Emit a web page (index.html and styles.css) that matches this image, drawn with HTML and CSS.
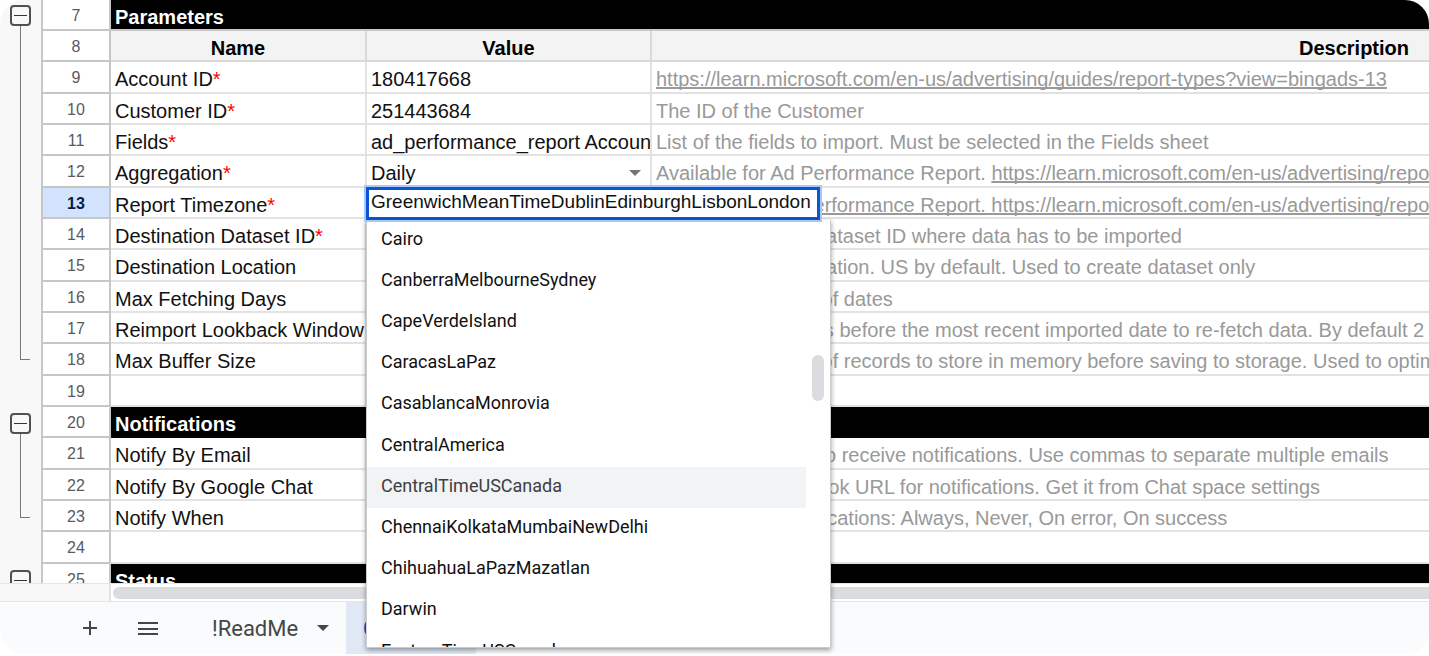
FILE: index.html
```html
<!DOCTYPE html>
<html lang="en">
<head>
<meta charset="utf-8">
<title>Report import settings</title>
<link rel="stylesheet" href="styles.css">
</head>
<body>
<main class="app">
  <div class="sheet">
    <div class="gutter">
      <div class="group group-parameters">
        <button class="toggle" aria-label="Collapse Parameters"></button>
        <span class="bracket"></span>
      </div>
      <div class="group group-notifications">
        <button class="toggle" aria-label="Collapse Notifications"></button>
        <span class="bracket"></span>
      </div>
      <div class="group">
        <button class="toggle" aria-label="Collapse Status"></button>
      </div>
    </div>
    <div class="grid">
      <table>
        <colgroup><col class="col-number"><col class="col-name"><col class="col-value"><col class="col-description"></colgroup>
        <tbody>
          <tr class="section first"><th class="number">7</th><td>Parameters</td><td></td><td></td></tr>
          <tr class="heading"><th class="number">8</th><th>Name</th><th>Value</th><th>Description</th></tr>
          <tr><th class="number">9</th><td>Account ID<span class="required">*</span></td><td>180417668</td><td><a href="#">https://learn.microsoft.com/en-us/advertising/guides/report-types?view=bingads-13</a></td></tr>
          <tr><th class="number">10</th><td>Customer ID<span class="required">*</span></td><td>251443684</td><td>The ID of the Customer</td></tr>
          <tr><th class="number">11</th><td>Fields<span class="required">*</span></td><td>ad_performance_report Account</td><td>List of the fields to import. Must be selected in the Fields sheet</td></tr>
          <tr><th class="number">12</th><td>Aggregation<span class="required">*</span></td><td><button class="cell-select">Daily<svg width="14" height="8" viewBox="0 0 14 8"><path d="M1 1h12L7 7z" fill="#757575"/></svg></button></td><td>Available for Ad Performance Report. <a href="#">https://learn.microsoft.com/en-us/advertising/reporting-service</a></td></tr>
          <tr><th class="number selected">13</th><td>Report Timezone<span class="required">*</span></td><td></td><td><a href="#">Available for Ad Performance Report. https://learn.microsoft.com/en-us/advertising/reporting-service</a></td></tr>
          <tr><th class="number">14</th><td>Destination Dataset ID<span class="required">*</span></td><td></td><td>Google BigQuery dataset ID where data has to be imported</td></tr>
          <tr><th class="number">15</th><td>Destination Location</td><td></td><td>Google Dataset location. US by default. Used to create dataset only</td></tr>
          <tr><th class="number">16</th><td>Max Fetching Days</td><td></td><td>Maximum number of dates</td></tr>
          <tr><th class="number">17</th><td>Reimport Lookback Window</td><td></td><td>The number of days before the most recent imported date to re-fetch data. By default 2 days</td></tr>
          <tr><th class="number">18</th><td>Max Buffer Size</td><td></td><td>Maximum number of records to store in memory before saving to storage. Used to optimize</td></tr>
          <tr><th class="number">19</th><td></td><td></td><td></td></tr>
          <tr class="section"><th class="number">20</th><td>Notifications</td><td></td><td></td></tr>
          <tr><th class="number">21</th><td>Notify By Email</td><td></td><td>Emails addresses to receive notifications. Use commas to separate multiple emails</td></tr>
          <tr><th class="number">22</th><td>Notify By Google Chat</td><td></td><td>Google chat webhook URL for notifications. Get it from Chat space settings</td></tr>
          <tr><th class="number">23</th><td>Notify When</td><td></td><td>When to send notifications: Always, Never, On error, On success</td></tr>
          <tr><th class="number">24</th><td></td><td></td><td></td></tr>
          <tr class="section"><th class="number">25</th><td>Status</td><td></td><td></td></tr>
        </tbody>
      </table>
    </div>
  </div>
  <div class="scroll-strip"><span class="corner"></span><span class="track"><span class="thumb"></span></span></div>
  <nav class="tabs">
    <button class="icon-button" aria-label="Add sheet"><svg width="16" height="16" viewBox="0 0 16 16"><path d="M8 1v14M1 8h14" stroke="#444746" stroke-width="2"/></svg></button>
    <button class="icon-button menu" aria-label="All sheets"><svg width="22" height="16" viewBox="0 0 22 16"><path d="M1 3h20M1 9h20M1 14h20" stroke="#444746" stroke-width="2"/></svg></button>
    <button class="tab">!ReadMe<svg width="12" height="8" viewBox="0 0 12 8"><path d="M0 1h12L6 7z" fill="#444746"/></svg></button>
    <button class="tab active">Config</button>
  </nav>
  <div class="editor">
    <input class="editor-input" aria-label="Report Timezone" value="GreenwichMeanTimeDublinEdinburghLisbonLondon">
    <div class="dropdown">
      <ul class="options" role="listbox" aria-label="Timezones">
        <li role="option">Cairo</li>
        <li role="option">CanberraMelbourneSydney</li>
        <li role="option">CapeVerdeIsland</li>
        <li role="option">CaracasLaPaz</li>
        <li role="option">CasablancaMonrovia</li>
        <li role="option">CentralAmerica</li>
        <li role="option" class="hovered" aria-selected="true">CentralTimeUSCanada</li>
        <li role="option">ChennaiKolkataMumbaiNewDelhi</li>
        <li role="option">ChihuahuaLaPazMazatlan</li>
        <li role="option">Darwin</li>
        <li role="option">EasternTimeUSCanada</li>
      </ul>
      <div class="dropdown-scroll"><span class="dropdown-thumb"></span></div>
    </div>
  </div>
</main>
</body>
</html>
```
FILE: styles.css
```css
* {
  box-sizing: border-box;
}

body {
  margin: 0;
  background: #fff;
  font-family: "Liberation Sans", Arial, sans-serif;
  font-size: 20px;
  color: #111;
}

button {
  margin: 0;
  padding: 0;
  border: 0;
  background: none;
  color: inherit;
  font: inherit;
}

.app {
  position: relative;
  display: flex;
  flex-direction: column;
  height: calc(100vh - 2px);
  border-radius: 24px;
  background: #f9fbfd;
}

.sheet {
  display: flex;
  flex: 1;
  min-height: 0;
  overflow: hidden;
  border-radius: 24px 24px 0 0;
  background: #f8f8f8;
}

/* Row group outline */
.gutter {
  flex: none;
  width: 43px;
  border-right: 2px solid #c4c7c5;
}

.group {
  display: flex;
  flex-direction: column;
  align-items: flex-start;
  padding: 5px 0 48px 10px;
}

.group-parameters {
  height: 408px;
}

.group-notifications {
  height: 157px;
  padding-bottom: 47px;
}

.toggle {
  display: flex;
  flex: none;
  align-items: center;
  justify-content: center;
  width: 21px;
  height: 21px;
  border: 2px solid #505151;
  border-radius: 4px;
  background: #f8f8f8;
}

.toggle::before {
  content: "";
  width: 13px;
  height: 1px;
  background: #333;
}

.bracket {
  flex: 1;
  width: 10px;
  margin-left: 10px;
  border: solid #777;
  border-width: 0 0 1px 1px;
}

.grid {
  flex: 1;
  min-width: 0;
  overflow: hidden;
  background: #fff;
}

table {
  width: 2015px;
  table-layout: fixed;
  border-collapse: separate;
  border-spacing: 0;
}

.col-number { width: 68px; }
.col-name { width: 256px; }
.col-value { width: 285px; }

td,
th {
  height: 31px;
  padding: 4px 4px 0;
  overflow: hidden;
  border: solid #e2e2e2;
  border-width: 0 2px 2px 0;
  line-height: 24px;
  text-align: left;
  white-space: nowrap;
}

tr:nth-child(3n) > * {
  height: 32px;
}

td:last-child {
  color: #999;
}

.heading th {
  background: #f3f3f3;
  border-color: #d9d9d9;
  color: #000;
  text-align: center;
}

tr .number {
  padding: 2px 0 0;
  border-color: #c4c7c5;
  background: #fff;
  color: #575b5f;
  font-size: 16px;
  font-weight: 400;
  text-align: center;
}

tr .selected {
  background: #d3e3fd;
  color: #041e49;
  font-weight: 700;
}

.section td {
  border-right: 0;
  border-color: #000;
  background: #000;
  color: #fff;
  font-weight: 700;
}

.first td {
  border-bottom-color: #c8c8c8;
}

.required {
  color: #f00;
}

a {
  color: inherit;
  text-decoration-skip-ink: none;
}

.cell-select {
  display: flex;
  align-items: center;
  justify-content: space-between;
  width: 100%;
  padding-right: 4px;
}

/* Horizontal scrollbar */
.scroll-strip {
  display: flex;
  height: 19px;
  border: solid #e4e5e6;
  border-width: 1px 0;
}

.corner {
  width: 111px;
  border-right: 2px solid #e1e1e1;
  background: #f8f8f8;
}

.track {
  flex: 1;
  padding: 3px 0 2px 2px;
  background: #fff;
}

.thumb {
  display: block;
  height: 12px;
  border-radius: 6px 0 0 6px;
  background: #dadce0;
}

/* Sheet tabs */
.tabs {
  display: flex;
  height: 52px;
  padding-left: 82px;
  color: #444746;
  font-family: Roboto, sans-serif;
  font-size: 22px;
}

.icon-button {
  display: flex;
  align-items: center;
}

.menu {
  margin-left: 39px;
}

.tab {
  display: flex;
  align-items: center;
  justify-content: space-between;
  width: 151px;
  margin-left: 36px;
  padding: 0 17px;
}

.active {
  width: 130px;
  margin-left: 0;
  background: #e1e9f7;
  color: #0b57d0;
  font-weight: 500;
}

/* Cell editor and its option list, floating over the grid */
.editor {
  position: absolute;
  top: 187px;
  left: 366px;
}

.editor-input {
  display: block;
  width: 454px;
  height: 33px;
  padding: 0 2px 3px;
  border: 3px solid #0b57d0;
  outline: 2px solid #a8c7fa;
  background: #fff;
  color: #111;
  font: inherit;
  font-size: 19px;
}

.dropdown {
  display: flex;
  width: 465px;
  height: 428px;
  overflow: hidden;
  border: 1px solid #ccc;
  border-top: 0;
  background: #fff;
  box-shadow: 0 2px 5px rgba(0, 0, 0, 0.4);
}

.options {
  flex: 1;
  margin: 0;
  padding: 0;
  list-style: none;
  font-family: Roboto, sans-serif;
  font-size: 18px;
  line-height: 37px;
}

.options li {
  padding: 0 0 4px 14px;
}

.options li:nth-child(5n) {
  padding-bottom: 5px;
}

.hovered {
  background: #f1f3f4;
  color: #3c4043;
}

.dropdown-scroll {
  width: 24px;
  padding: 135px 6px 0;
}

.dropdown-thumb {
  display: block;
  height: 46px;
  border-radius: 6px;
  background: #dadce0;
}
```
